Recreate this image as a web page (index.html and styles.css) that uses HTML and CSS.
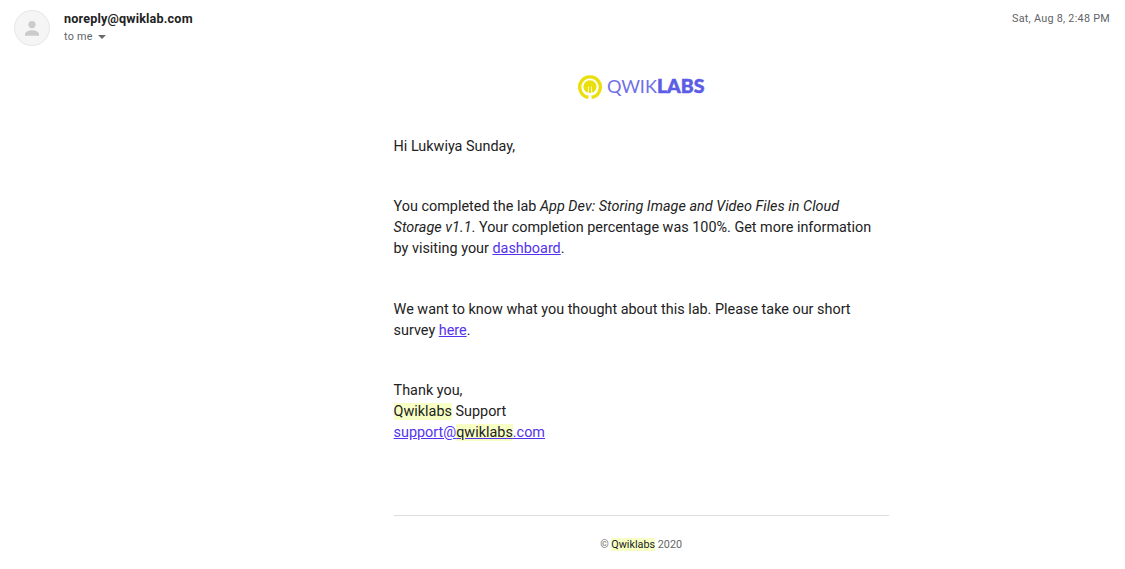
FILE: index.html
```html
<!DOCTYPE html>
<html lang="en">
<head>
<meta charset="utf-8">
<title>Qwiklabs email</title>
<link rel="stylesheet" href="styles.css">
</head>
<body>
<header class="message-header">
  <svg class="avatar" viewBox="0 0 36 36" aria-hidden="true">
    <circle cx="18" cy="18" r="17.5" fill="#f5f5f5" stroke="#e6e6e6"/>
    <circle cx="18" cy="14.6" r="3.6" fill="#cbcbcb"/>
    <path d="M11 25.7v-1.6c0-2.6 4.4-3.9 7-3.9s7 1.3 7 3.9v1.6z" fill="#cbcbcb"/>
  </svg>
  <div class="sender">
    <div class="sender-address">noreply@qwiklab.com</div>
    <div class="recipient">to me <span class="caret"></span></div>
  </div>
  <time class="date">Sat, Aug 8, 2:48 PM</time>
</header>
<main class="message">
  <svg class="logo" viewBox="0 0 128 26" role="img" aria-label="Qwiklabs">
    <path d="M11.4 23.3A10.3 10.3 0 1 1 14.6 23.3" fill="none" stroke="#eadf0c" stroke-width="3.4"/>
    <path d="M9.6 18.4A6.6 6.6 0 1 1 16.4 18.4L15 17.8V12.4H11V17.8Z" fill="#eadf0c"/>
    <path d="M13 11.8V19" stroke="#eadf0c" stroke-width="2.6"/>
    <text class="logo-thin" x="29.9" y="18.9" textLength="50" lengthAdjust="spacingAndGlyphs">QWIK</text>
    <text class="logo-bold" x="79.9" y="18.9" textLength="47.5" lengthAdjust="spacingAndGlyphs">LABS</text>
  </svg>
  <p>Hi Lukwiya Sunday,</p>
  <p>You completed the lab <em>App Dev: Storing Image and Video Files in Cloud Storage v1.1</em>. Your completion percentage was 100%. Get more information by visiting your <a href="#">dashboard</a>.</p>
  <p>We want to know what you thought about this lab. Please take our short survey <a href="#">here</a>.</p>
  <p>Thank you,<br><mark>Qwiklabs</mark> Support<br><a href="#">support@<mark>qwiklabs</mark>.com</a></p>
  <footer class="message-footer">© <mark>Qwiklabs</mark> 2020</footer>
</main>
</body>
</html>
```
FILE: styles.css
```css
body {
  margin: 0;
  background: #fff;
  color: #222;
  font-family: Roboto, sans-serif;
}

.message-header {
  display: flex;
  align-items: flex-start;
  padding: 10px 15px 0 14px;
  height: 64px;
  box-sizing: border-box;
}

.avatar {
  width: 36px;
  height: 36px;
  margin-right: 14px;
}

.sender-address {
  font-size: 12.6px;
  font-weight: 700;
  line-height: 18px;
  letter-spacing: 0.18px;
}

.recipient,
.date {
  color: #5f6368;
  font-size: 10.8px;
  line-height: 18px;
  letter-spacing: 0.27px;
}

.caret {
  display: inline-block;
  margin-left: 2px;
  border: 4px solid transparent;
  border-top-color: #666a6e;
  border-bottom: 0;
  vertical-align: 0.6px;
}

.date {
  margin-left: auto;
}

.message {
  width: 495px;
  margin-left: 393.6px;
  padding-top: 10px;
  font-size: 14.4px;
  line-height: 21px;
}

.logo {
  display: block;
  width: 128px;
  height: 26px;
  margin: 0 auto 35.5px;
}

.logo-thin,
.logo-bold {
  fill: #5c5ce6;
  font-family: Lato, sans-serif;
  font-size: 18px;
}

.logo-thin {
  font-weight: 400;
  opacity: 0.88;
}

.logo-bold {
  font-weight: 900;
  stroke: #5c5ce6;
  stroke-width: 0.5px;
}

.message p {
  margin: 0 0 39.6px;
}

.message p em {
  letter-spacing: 0.03px;
}

.message a {
  color: #5333ed;
}

.message mark {
  background: #f7ffc5;
  color: #222;
}

.message-footer {
  margin-top: 72px;
  padding-top: 18px;
  border-top: 1px solid #ddd;
  color: #666;
  font-size: 10.8px;
  text-align: center;
}
```
